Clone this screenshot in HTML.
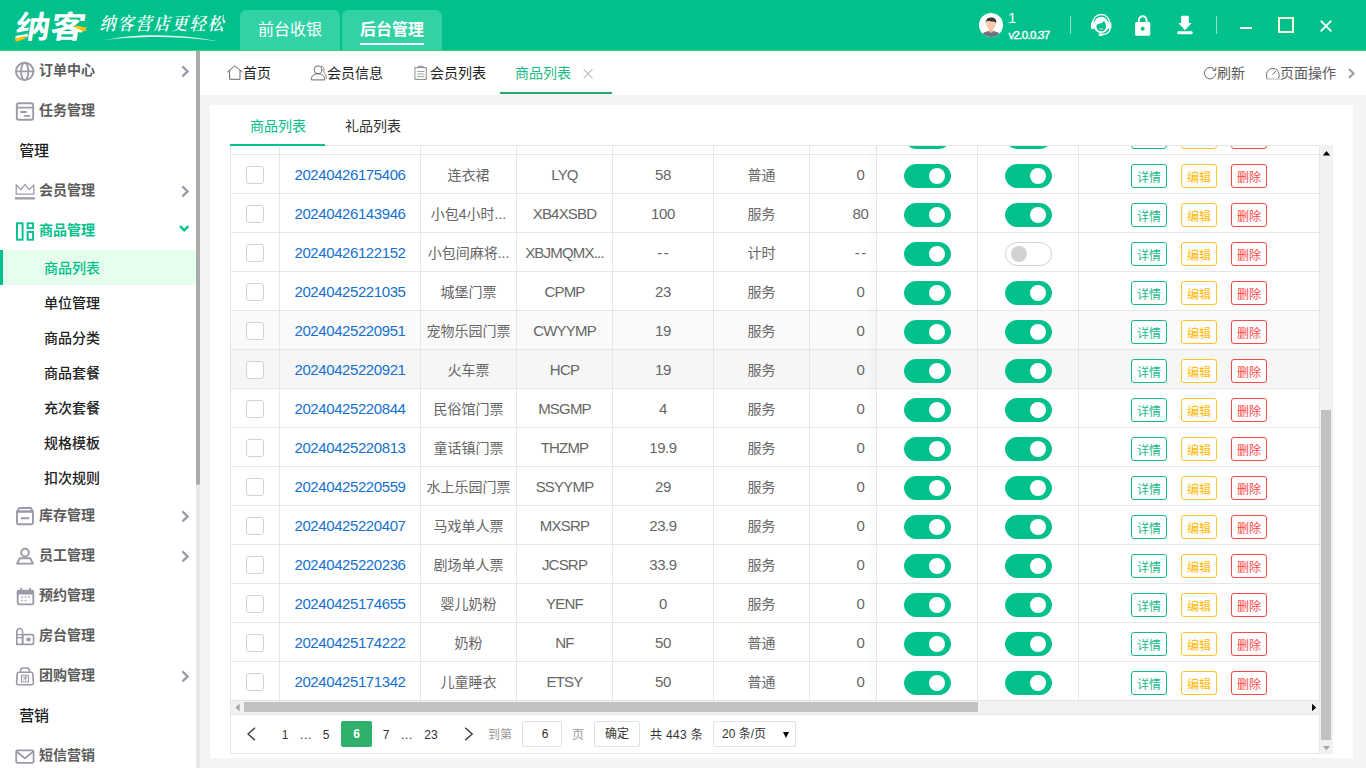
<!DOCTYPE html>
<html lang="zh-CN">
<head>
<meta charset="utf-8">
<title>纳客 - 商品列表</title>
<style>
*{box-sizing:border-box;margin:0;padding:0}
html,body{width:1366px;height:768px;overflow:hidden}
body{position:relative;background:#f4f4f4;font-family:"Liberation Sans","Noto Sans CJK SC",sans-serif;font-size:14px;color:#333;line-height:1}
.a{position:absolute}
svg{position:absolute;overflow:visible}
i{font-style:normal}
/* header */
#hd{left:0;top:0;width:1366px;height:50px;background:#00c08b}
#hdl{left:0;top:50px;width:1366px;height:1px;background:#3fd272}
#logo{left:12px;top:6px;font-size:31px;line-height:44px;font-weight:700;color:#fff;letter-spacing:0;transform:skewX(-9deg) scaleX(1.13);transform-origin:0 100%;white-space:nowrap}
#slogan{left:101px;top:11px;font-family:"Liberation Serif","Noto Serif CJK SC",serif;font-size:16px;line-height:26px;color:#fff;letter-spacing:2px;font-weight:600;white-space:nowrap;transform:skewX(-14deg) scaleY(1.12);transform-origin:0 50%}
.ht{top:10px;width:100px;height:40px;background:#33d1a6;border-radius:6px 6px 0 0;color:#fff;font-size:16px;line-height:40px;text-align:center}
.ht b{font-weight:700}
#hul{left:360px;top:43px;width:64px;height:2px;background:#fff}
.vd{top:16px;width:1px;height:18px;background:rgba(255,255,255,.55)}
#un{left:1008px;top:8.500px;font-size:15px;line-height:18px;color:#fff}
#ver{left:1008.500px;top:27.600px;font-size:11.500px;line-height:14px;color:#fff;font-weight:400;-webkit-text-stroke:.35px #fff;letter-spacing:-.7px;white-space:nowrap}
/* sidebar */
#sb{left:0;top:51px;width:196px;height:717px;background:#fff}
#sbt{left:196px;top:51px;width:4px;height:717px;background:#e8e8e8}
#sbh{left:196px;top:51px;width:4px;height:434px;background:#ababab;border-radius:0 0 2px 2px}
.mi{left:39px;font-size:14px;line-height:20px;font-weight:700;color:#5c5c5c;white-space:nowrap}
.mi.on{color:#00c08b}
.sec{left:19.300px;margin-top:.7px;font-size:15px;line-height:20px;font-weight:500;color:#1a1a1a;letter-spacing:-.3px}
.smi{left:44px;font-size:14px;line-height:20px;font-weight:500;color:#222;white-space:nowrap}
.smi.on{color:#00c08b}
#act{left:0;top:250px;width:196px;height:35px;background:#e6feec;border-left:3px solid #00c08b}
/* tab bar */
#tbar{left:200px;top:51px;width:1166px;height:44px;background:#fff}
.tt{top:63.400px;font-size:14px;line-height:20px;color:#222;white-space:nowrap}
.tt.on{color:#1bbc86;top:63px}
.tt.g{color:#5a5a5a}
#tul{left:500px;top:92px;width:112px;height:2px;background:#22ac68}
/* panel */
#pn{left:210px;top:105px;width:1143px;height:653px;background:#fff}
.it{top:116px;font-size:14px;line-height:20px;color:#333;white-space:nowrap}
.it.on{color:#00c08b}
#itl{left:230px;top:145px;width:1103px;height:1px;background:#e6e6e6}
#iul{left:230px;top:144px;width:95px;height:2px;background:#00c08b}
#box{left:230px;top:145px;width:1103px;height:609px;border:1px solid #e6e6e6;border-right:0}
#tb{left:231px;top:146px;width:1088px;height:555px;overflow:hidden;color:#666}
.tr{position:absolute;left:0;width:1088px;height:39px}
.td{position:absolute;top:0;height:39px;border-right:1px solid #e6e6e6;border-bottom:1px solid #e6e6e6;text-align:center;line-height:40px;font-size:14px;white-space:nowrap;background:#fff;z-index:1}
.c1,.c4,.c6{font-size:15px;letter-spacing:-.41px;line-height:39.500px}
.c3{font-size:15px;letter-spacing:-.8px;line-height:39.500px}
.hv1 .td{background:#fafafa}
.hv2 .td{background:#f6f6f6}
.c0{left:0;width:49px}.c1{left:49px;width:141px}.c2{left:190px;width:96px}.c3{left:286px;width:96px}.c4{left:382px;width:101px}.c5{left:483px;width:96px}.c6{left:579px;width:102px}
.f1{left:646px;width:101px;z-index:3}.f2{left:747px;width:101px;z-index:3}.f3{left:848px;width:240px;border-right:0;z-index:3}
.td a{color:#1570d0}
#fxs{left:645px;top:0;width:1px;height:555px;background:#e6e6e6;box-shadow:-1px 0 8px rgba(0,0,0,.18);z-index:2}
.cb{position:absolute;left:15px;top:11px;width:18px;height:18px;border:1px solid #d2d2d2;border-radius:3px;background:#fff}
.sw{position:absolute;left:27px;top:9px;width:47px;height:24px;border-radius:12px;background:#00c08b;border:1px solid #00c08b}
.sw i{position:absolute;left:24px;top:3px;width:16px;height:16px;border-radius:8px;background:#fff}
.sw.off{background:#fff;border-color:#d2d2d2}
.sw.off i{left:5px;background:#d2d2d2}
.btn{position:absolute;top:9px;width:36px;height:24px;border:1px solid;border-radius:3px;font-size:12px;line-height:26px;text-align:center;background:#fff}
.btn.g{left:52px;color:#16ba8a;border-color:#16ba8a}
.btn.y{left:102px;color:#ffb800;border-color:#ffc524}
.btn.r{left:152px;color:#ff4646;border-color:#ff4646}
/* scrollbars */
#hs{left:231px;top:701px;width:1088px;height:13px;background:#f1f1f1}
#hst{left:244px;top:702px;width:734px;height:10px;background:#c1c1c1}
#hsb{left:231px;top:714px;width:1088px;height:1px;background:#e6e6e6}
#vs{left:1319px;top:145px;width:14px;height:609px;background:#f1f1f1;border-left:1px solid #e6e6e6}
#vst{left:1321px;top:410px;width:10px;height:330px;background:#c1c1c1}
/* pagination */
.pg{top:724.500px;font-size:12px;line-height:20px;color:#333;white-space:nowrap;text-align:center}
.pg.l{color:#999}
#cur{left:341px;top:721px;width:31px;height:26px;background:#2fb06c;border-radius:2px;color:#fff;font-size:12px;line-height:26px;text-align:center;font-weight:700}
.bx{top:721px;height:26px;border:1px solid #e2e2e2;border-radius:2px;background:#fff;font-size:12px;line-height:24px;color:#333;white-space:nowrap}
</style>
</head>
<body>
<!-- ============ header ============ -->
<div class="a" id="hd"></div>
<div class="a" id="hdl"></div>
<div class="a" id="logo">纳客</div>
<svg style="left:0;top:0;z-index:5" width="100" height="50" viewBox="0 0 100 50">
<path d="M15 37.400 C18.500 38.200 22 37 25.600 35.800 L25.200 38.400 C21.500 39.600 18.800 41.600 15.600 41.200 Z" fill="#ffc107"/>
<path d="M73.500 26.200 C78 24.800 81.500 28 86.300 26.800 L85.800 30.800 C81 32 78.500 28 73.500 26.200 Z" fill="#ffc107"/>
</svg>
<div class="a" id="slogan">纳客营店更轻松</div>
<svg style="left:0;top:0" width="240" height="50" viewBox="0 0 240 50">
<path d="M103 40.300 C135 33.200 180 33.400 219 41.400 C180 35.600 135 36 103 40.300 Z" fill="#fff" opacity=".95"/>
</svg>
<div class="a ht" style="left:240px">前台收银</div>
<div class="a ht" style="left:342px"><b>后台管理</b></div>
<div class="a" id="hul"></div>

<!-- avatar -->
<svg style="left:979px;top:13px" width="24" height="24" viewBox="0 0 24 24">
<defs><clipPath id="avc"><circle cx="12" cy="12" r="12"/></clipPath></defs>
<circle cx="12" cy="12" r="12" fill="#fff"/>
<g clip-path="url(#avc)">
<path d="M2.5 25 C2.5 19.5 6.5 18 12 18 C17.5 18 21.5 19.5 21.5 25 Z" fill="#6f7380"/>
<path d="M10 15.5 h4 v3.2 c-1.2 1.2 -2.8 1.2 -4 0 Z" fill="#f2b99a"/>
<ellipse cx="12" cy="11.3" rx="4.6" ry="5.3" fill="#f7c9aa"/>
<path d="M6.9 10.8 C6.2 6.2 9 4.2 12.4 4.4 C16 4.3 18 6.6 17.1 10.8 C16.6 8.9 15.6 8.3 13.8 8.4 C11.6 8.6 9.2 8.2 8.2 7.8 C7.4 8.5 7.1 9.6 6.9 10.8 Z" fill="#3a3636"/>
</g>
</svg>
<div class="a" id="un">1</div>
<div class="a" id="ver">v2.0.0.37</div>
<div class="a vd" style="left:1070px"></div>
<!-- headset -->
<svg style="left:1090px;top:13px" width="23" height="24" viewBox="0 0 23 24">
<path d="M2.600 11 C2.600 5.200 6.400 1.500 11.200 1.500 C16 1.500 19.800 5.200 19.800 11" fill="none" stroke="#fff" stroke-width="1.300"/>
<path d="M11.200 3.800 C15.600 3.800 18.600 7.600 18.600 12 C18.600 16.800 15.400 20 11.200 20 C7 20 3.800 16.800 3.800 12 C3.800 7.600 6.800 3.800 11.200 3.800 Z M6.400 13.400 C6.400 16.200 8.400 18.200 11.200 18.200 C14 18.200 16 16.200 16 13.400 C16 12 15.700 11 15.300 10.200 C14.700 9.600 14.300 8.800 14.100 7.800 C13.100 9.600 10.800 10.800 8.400 11 C7.200 11.100 6.400 11.800 6.400 13.400 Z" fill="#fff" fill-rule="evenodd"/>
<rect x="1" y="8.600" width="3.600" height="7.600" rx="1.800" fill="#fff"/>
<rect x="17.800" y="8.600" width="3.600" height="7.600" rx="1.800" fill="#fff"/>
<path d="M19.900 15.400 C19.900 19 16.800 21.200 12.200 21.500" fill="none" stroke="#fff" stroke-width="1.300"/>
<rect x="8.600" y="20.300" width="4.200" height="2.800" rx="1.400" fill="#fff"/>
<path d="M9.600 15.600 C10.600 16.500 12 16.500 13 15.600" fill="none" stroke="#fff" stroke-width="1"/>
</svg>
<!-- lock -->
<svg style="left:1135px;top:15px" width="16" height="21" viewBox="0 0 16 21">
<path d="M3.8 8 V5.4 C3.8 2.9 5.6 1.3 7.7 1.3 C9.8 1.3 11.6 2.9 11.6 5.4 V8" fill="none" stroke="#fff" stroke-width="1.9"/>
<path d="M1.6 7 H13.8 A1.5 1.5 0 0 1 15.3 8.5 V19.2 A1.5 1.5 0 0 1 13.8 20.7 H1.6 A1.5 1.5 0 0 1 .1 19.2 V8.500 A1.5 1.5 0 0 1 1.6 7 Z M7.700 11.800 A2 2 0 1 0 7.710 11.800 Z" fill="#fff" fill-rule="evenodd"/>
</svg>
<!-- download -->
<svg style="left:1177px;top:15px" width="16" height="20" viewBox="0 0 16 20">
<path d="M5 .7 H11 A.8 .8 0 0 1 11.800 1.500 V8 H14.700 L8 15.300 L1.300 8 H4.200 V1.500 A.8 .8 0 0 1 5 .7 Z" fill="#fff"/>
<rect x=".3" y="16.2" width="15.4" height="3.1" rx="1.2" fill="#fff"/>
</svg>
<div class="a vd" style="left:1216px"></div>
<!-- window controls -->
<div class="a" style="left:1240px;top:27px;width:12px;height:2px;background:#fff"></div>
<div class="a" style="left:1278px;top:17px;width:16px;height:16px;border:2px solid #fafadc"></div>
<svg style="left:1320px;top:20px" width="12" height="12" viewBox="0 0 12 12"><path d="M.7 .7 L11.3 11.3 M11.3 .7 L.7 11.3" stroke="#fff" stroke-width="1.9" fill="none"/></svg>

<!-- ============ sidebar ============ -->
<div class="a" id="sb"></div>
<div class="a" id="sbt"></div>
<div class="a" id="sbh"></div>
<div class="a" id="act"></div>

<!-- icons -->
<svg style="left:0;top:0" width="200" height="768" viewBox="0 0 200 768" fill="none" stroke="#9a9aa8" stroke-width="1.9" stroke-linecap="round" stroke-linejoin="round">
<!-- globe -->
<circle cx="24.7" cy="71.4" r="8.7"/>
<ellipse cx="24.7" cy="71.4" rx="3.6" ry="8.7"/>
<path d="M16 71.400 H33.400"/>
<!-- task -->
<rect x="16.800" y="103.200" width="16.400" height="16.600" rx="2"/>
<path d="M16.800 107.600 H33.200"/>
<path d="M21 112 H26 M24.500 115.800 H29.500" stroke-width="1.8"/>
<!-- crown -->
<path d="M16.200 194.200 V185 L20.800 189.600 L25 184.400 L29.200 189.600 L33.800 185 V194.200 Z" stroke-width="1.3"/>
<path d="M15.800 198.400 H34.200" stroke-width="2.2"/>
<!-- goods (green) -->
<g stroke="#00c08b" stroke-width="1.9" stroke-linejoin="miter" stroke-linecap="butt">
<rect x="17" y="223.300" width="5.600" height="16.400"/>
<rect x="27.600" y="223.300" width="5.500" height="4.800"/>
<rect x="27.600" y="232" width="5.500" height="7.700"/>
</g>
<!-- stock box -->
<path d="M17 511.500 L19.300 508 H30.700 L33 511.500 Z"/>
<rect x="17" y="511.500" width="16" height="12.700" rx="1.800"/>
<path d="M21.600 518.200 H28.400" stroke-width="2"/>
<!-- staff -->
<circle cx="25" cy="552.600" r="3.900"/>
<path d="M17 563.600 L19.800 558.200 H30.200 L33 563.600 Z"/>
<!-- calendar -->
<rect x="17.700" y="590.800" width="15.600" height="13.600" rx="1.500"/>
<path d="M17.700 591 H33.300 V594 H17.700 Z" fill="#9a9aa8" stroke-width="1"/>
<path d="M21 588.600 V591 M30 588.600 V591" stroke-width="1.800"/>
<path d="M21.300 597 H22.700 M24.800 597 H26.200 M28.300 597 H29.700 M21.300 600.400 H22.700 M24.800 600.400 H26.200" stroke-width="1.500" stroke-linecap="butt"/>
<!-- room -->
<path d="M16.800 644.400 V632.200 C16.800 630 18.200 628.500 19.600 628.500 C21 628.500 22.600 630 22.600 632.200 V644.400 Z" stroke-width="1.600"/>
<path d="M17 634.600 H22.400 M17 637.600 H22.400" stroke-width="1.200" stroke-linecap="butt"/>
<rect x="22.600" y="634.600" width="11" height="9.800" rx="1.800" stroke-width="1.600"/>
<rect x="26.400" y="637.800" width="4.200" height="3.400" fill="#9a9aa8" stroke="none"/>
<!-- group buy bag -->
<path d="M20.600 672.200 V670.600 C20.600 668.800 22 668 23.200 668 H26.800 C28 668 29.400 668.800 29.400 670.600 V672.200" stroke-width="1.600"/>
<path d="M18.800 672.200 H31.200 C32.200 672.200 32.700 672.800 32.800 673.600 L33.400 683 C33.500 684 32.800 684.800 31.800 684.800 H18.200 C17.200 684.800 16.500 684 16.600 683 L17.200 673.600 C17.300 672.800 17.800 672.200 18.800 672.200 Z" stroke-width="1.600"/>
<rect x="21.500" y="675.200" width="7" height="6.800" stroke-width="1.100"/>
<path d="M23 677.400 H27 M25.600 676.400 V680.800 M23.200 680.200 L25.600 678" stroke-width=".9"/>
<!-- sms -->
<rect x="16.200" y="750.400" width="17.400" height="12.400" rx="1.500" stroke-width="1.800"/>
<path d="M16.800 751.800 L24.900 758.200 L33 751.800" stroke-width="1.800"/>
<!-- chevrons -->
<g stroke-width="2.300" stroke-linecap="butt" stroke-linejoin="miter">
<path d="M182.400 66.400 L187.600 71.400 L182.400 76.400"/>
<path d="M182.400 186.400 L187.600 191.400 L182.400 196.400"/>
<path d="M182.400 511.400 L187.600 516.400 L182.400 521.400"/>
<path d="M182.400 551.400 L187.600 556.400 L182.400 561.400"/>
<path d="M182.400 671.400 L187.600 676.400 L182.400 681.400"/>
<path d="M180 226.200 L184.200 230.400 L188.400 226.200" stroke="#00c08b" stroke-width="2.400"/>
</g>
</svg>

<div class="a mi" style="top:60px">订单中心</div>
<div class="a mi" style="top:100px">任务管理</div>
<div class="a sec" style="top:140px">管理</div>
<div class="a mi" style="top:180px">会员管理</div>
<div class="a mi on" style="top:220px">商品管理</div>
<div class="a smi on" style="top:258px">商品列表</div>
<div class="a smi" style="top:293px">单位管理</div>
<div class="a smi" style="top:328px">商品分类</div>
<div class="a smi" style="top:363px">商品套餐</div>
<div class="a smi" style="top:398px">充次套餐</div>
<div class="a smi" style="top:433px">规格模板</div>
<div class="a smi" style="top:468px">扣次规则</div>
<div class="a mi" style="top:505px">库存管理</div>
<div class="a mi" style="top:545px">员工管理</div>
<div class="a mi" style="top:585px">预约管理</div>
<div class="a mi" style="top:625px">房台管理</div>
<div class="a mi" style="top:665px">团购管理</div>
<div class="a sec" style="top:705px">营销</div>
<div class="a mi" style="top:745px">短信营销</div>

<!-- ============ tab bar ============ -->
<div class="a" id="tbar"></div>
<svg style="left:200px;top:51px" width="1166" height="44" viewBox="200 51 1166 44" fill="none" stroke="#6a6a6a" stroke-width="1" stroke-linejoin="round" stroke-linecap="round">
<!-- home -->
<path d="M227.500 72 L234.800 65.800 L242.200 72"/>
<path d="M229.600 70.600 V79.300 H240 V70.600"/>
<!-- user -->
<circle cx="318" cy="69.800" r="3.900"/>
<path d="M311.300 79.500 C311.300 75.600 314 73.800 318 73.800 C322 73.800 324.700 75.600 324.700 79.500 Z"/>
<path d="M321.200 66 C324.200 66.400 325 69.600 323.400 72.200 C325.600 73.200 326.400 75.600 326.400 78.800" stroke="#888"/>
<!-- clipboard -->
<rect x="415.300" y="67.600" width="11" height="11.800" stroke="#888"/>
<path d="M418.600 67.600 V66.300 H423 V67.600" stroke="#888"/>
<path d="M417.600 71.500 H424 M417.600 74 H424 M417.600 76.500 H424" stroke="#999" stroke-width=".9"/>
<!-- close x -->
<path d="M584 69.600 L592.200 77.800 M592.200 69.600 L584 77.800" stroke="#bbb" stroke-width="1.1"/>
<!-- refresh -->
<path d="M1214.800 69.600 A5.800 5.800 0 1 0 1216 73.600"/>
<path d="M1215.800 67.400 V70.400 H1212.800"/>
<!-- gauge -->
<path d="M1267.200 78.600 C1264.800 73.800 1268 68.400 1272.800 68.400 C1277.600 68.400 1280.800 73.800 1278.400 78.600"/>
<path d="M1266.400 79 H1279.400" stroke="#ccc" stroke-width="1.300"/>
<path d="M1272.600 74.400 L1275.600 71.400"/>
<!-- chevron -->
<path d="M1349 69 L1353.600 73.400 L1349 77.800" stroke="#9a9aa8" stroke-width="2" stroke-linecap="butt" stroke-linejoin="miter"/>
</svg>
<div class="a tt" style="left:243px">首页</div>
<div class="a tt" style="left:327px">会员信息</div>
<div class="a tt" style="left:430px">会员列表</div>
<div class="a tt on" style="left:515px">商品列表</div>
<div class="a" id="tul"></div>
<div class="a tt g" style="left:1217px">刷新</div>
<div class="a tt g" style="left:1280px">页面操作</div>

<!-- ============ panel ============ -->
<div class="a" id="pn"></div>
<div class="a it on" style="left:250px">商品列表</div>
<div class="a it" style="left:345px">礼品列表</div>
<div class="a" id="box"></div>
<div class="a" id="iul"></div>

<div class="a" id="tb">
<div class="tr" style="top:-30px"><div class="td c0"></div><div class="td c1"></div><div class="td c2"></div><div class="td c3"></div><div class="td c4"></div><div class="td c5"></div><div class="td c6"></div><div class="td f1"><span class="sw"><i></i></span></div><div class="td f2"><span class="sw"><i></i></span></div><div class="td f3"><span class="btn g">详情</span><span class="btn y">编辑</span><span class="btn r">删除</span></div></div>
<div class="tr" style="top:9px"><div class="td c0"><span class="cb"></span></div><div class="td c1"><a>20240426175406</a></div><div class="td c2">连衣裙</div><div class="td c3">LYQ</div><div class="td c4">58</div><div class="td c5">普通</div><div class="td c6">0</div><div class="td f1"><span class="sw"><i></i></span></div><div class="td f2"><span class="sw"><i></i></span></div><div class="td f3"><span class="btn g">详情</span><span class="btn y">编辑</span><span class="btn r">删除</span></div></div>
<div class="tr" style="top:48px"><div class="td c0"><span class="cb"></span></div><div class="td c1"><a>20240426143946</a></div><div class="td c2">小包4小时...</div><div class="td c3">XB4XSBD</div><div class="td c4">100</div><div class="td c5">服务</div><div class="td c6">80</div><div class="td f1"><span class="sw"><i></i></span></div><div class="td f2"><span class="sw"><i></i></span></div><div class="td f3"><span class="btn g">详情</span><span class="btn y">编辑</span><span class="btn r">删除</span></div></div>
<div class="tr" style="top:87px"><div class="td c0"><span class="cb"></span></div><div class="td c1"><a>20240426122152</a></div><div class="td c2">小包间麻将...</div><div class="td c3">XBJMQMX...</div><div class="td c4"><span style="letter-spacing:1.6px;margin-left:1.6px">--</span></div><div class="td c5">计时</div><div class="td c6"><span style="letter-spacing:1.6px;margin-left:1.6px">--</span></div><div class="td f1"><span class="sw"><i></i></span></div><div class="td f2"><span class="sw off"><i></i></span></div><div class="td f3"><span class="btn g">详情</span><span class="btn y">编辑</span><span class="btn r">删除</span></div></div>
<div class="tr" style="top:126px"><div class="td c0"><span class="cb"></span></div><div class="td c1"><a>20240425221035</a></div><div class="td c2">城堡门票</div><div class="td c3">CPMP</div><div class="td c4">23</div><div class="td c5">服务</div><div class="td c6">0</div><div class="td f1"><span class="sw"><i></i></span></div><div class="td f2"><span class="sw"><i></i></span></div><div class="td f3"><span class="btn g">详情</span><span class="btn y">编辑</span><span class="btn r">删除</span></div></div>
<div class="tr hv1" style="top:165px"><div class="td c0"><span class="cb"></span></div><div class="td c1"><a>20240425220951</a></div><div class="td c2">宠物乐园门票</div><div class="td c3">CWYYMP</div><div class="td c4">19</div><div class="td c5">服务</div><div class="td c6">0</div><div class="td f1"><span class="sw"><i></i></span></div><div class="td f2"><span class="sw"><i></i></span></div><div class="td f3"><span class="btn g">详情</span><span class="btn y">编辑</span><span class="btn r">删除</span></div></div>
<div class="tr hv2" style="top:204px"><div class="td c0"><span class="cb"></span></div><div class="td c1"><a>20240425220921</a></div><div class="td c2">火车票</div><div class="td c3">HCP</div><div class="td c4">19</div><div class="td c5">服务</div><div class="td c6">0</div><div class="td f1"><span class="sw"><i></i></span></div><div class="td f2"><span class="sw"><i></i></span></div><div class="td f3"><span class="btn g">详情</span><span class="btn y">编辑</span><span class="btn r">删除</span></div></div>
<div class="tr" style="top:243px"><div class="td c0"><span class="cb"></span></div><div class="td c1"><a>20240425220844</a></div><div class="td c2">民俗馆门票</div><div class="td c3">MSGMP</div><div class="td c4">4</div><div class="td c5">服务</div><div class="td c6">0</div><div class="td f1"><span class="sw"><i></i></span></div><div class="td f2"><span class="sw"><i></i></span></div><div class="td f3"><span class="btn g">详情</span><span class="btn y">编辑</span><span class="btn r">删除</span></div></div>
<div class="tr" style="top:282px"><div class="td c0"><span class="cb"></span></div><div class="td c1"><a>20240425220813</a></div><div class="td c2">童话镇门票</div><div class="td c3">THZMP</div><div class="td c4">19.9</div><div class="td c5">服务</div><div class="td c6">0</div><div class="td f1"><span class="sw"><i></i></span></div><div class="td f2"><span class="sw"><i></i></span></div><div class="td f3"><span class="btn g">详情</span><span class="btn y">编辑</span><span class="btn r">删除</span></div></div>
<div class="tr" style="top:321px"><div class="td c0"><span class="cb"></span></div><div class="td c1"><a>20240425220559</a></div><div class="td c2">水上乐园门票</div><div class="td c3">SSYYMP</div><div class="td c4">29</div><div class="td c5">服务</div><div class="td c6">0</div><div class="td f1"><span class="sw"><i></i></span></div><div class="td f2"><span class="sw"><i></i></span></div><div class="td f3"><span class="btn g">详情</span><span class="btn y">编辑</span><span class="btn r">删除</span></div></div>
<div class="tr" style="top:360px"><div class="td c0"><span class="cb"></span></div><div class="td c1"><a>20240425220407</a></div><div class="td c2">马戏单人票</div><div class="td c3">MXSRP</div><div class="td c4">23.9</div><div class="td c5">服务</div><div class="td c6">0</div><div class="td f1"><span class="sw"><i></i></span></div><div class="td f2"><span class="sw"><i></i></span></div><div class="td f3"><span class="btn g">详情</span><span class="btn y">编辑</span><span class="btn r">删除</span></div></div>
<div class="tr" style="top:399px"><div class="td c0"><span class="cb"></span></div><div class="td c1"><a>20240425220236</a></div><div class="td c2">剧场单人票</div><div class="td c3">JCSRP</div><div class="td c4">33.9</div><div class="td c5">服务</div><div class="td c6">0</div><div class="td f1"><span class="sw"><i></i></span></div><div class="td f2"><span class="sw"><i></i></span></div><div class="td f3"><span class="btn g">详情</span><span class="btn y">编辑</span><span class="btn r">删除</span></div></div>
<div class="tr" style="top:438px"><div class="td c0"><span class="cb"></span></div><div class="td c1"><a>20240425174655</a></div><div class="td c2">婴儿奶粉</div><div class="td c3">YENF</div><div class="td c4">0</div><div class="td c5">服务</div><div class="td c6">0</div><div class="td f1"><span class="sw"><i></i></span></div><div class="td f2"><span class="sw"><i></i></span></div><div class="td f3"><span class="btn g">详情</span><span class="btn y">编辑</span><span class="btn r">删除</span></div></div>
<div class="tr" style="top:477px"><div class="td c0"><span class="cb"></span></div><div class="td c1"><a>20240425174222</a></div><div class="td c2">奶粉</div><div class="td c3">NF</div><div class="td c4">50</div><div class="td c5">普通</div><div class="td c6">0</div><div class="td f1"><span class="sw"><i></i></span></div><div class="td f2"><span class="sw"><i></i></span></div><div class="td f3"><span class="btn g">详情</span><span class="btn y">编辑</span><span class="btn r">删除</span></div></div>
<div class="tr" style="top:516px"><div class="td c0"><span class="cb"></span></div><div class="td c1"><a>20240425171342</a></div><div class="td c2">儿童睡衣</div><div class="td c3">ETSY</div><div class="td c4">50</div><div class="td c5">普通</div><div class="td c6">0</div><div class="td f1"><span class="sw"><i></i></span></div><div class="td f2"><span class="sw"><i></i></span></div><div class="td f3"><span class="btn g">详情</span><span class="btn y">编辑</span><span class="btn r">删除</span></div></div>
<div class="a" id="fxs"></div>
</div>

<!-- scrollbars -->
<div class="a" id="hs"></div>
<div class="a" id="hst"></div>
<div class="a" id="hsb"></div>
<svg style="left:231px;top:701px" width="1088" height="13" viewBox="0 0 1088 13">
<path d="M8.600 2.800 L4.400 6.500 L8.600 10.200 Z" fill="#a3a3a3"/>
<path d="M1081 2.700 L1085.200 6.500 L1081 10.300 Z" fill="#000"/>
</svg>
<div class="a" id="vs"></div>
<div class="a" id="vst"></div>
<svg style="left:1320px;top:145px" width="13" height="609" viewBox="0 0 13 609">
<path d="M2.800 10.400 L6.500 6 L10.200 10.400 Z" fill="#000"/>
<path d="M3 601 L6.500 605.200 L10 601 Z" fill="#a3a3a3"/>
</svg>

<!-- pagination -->
<svg style="left:246px;top:726px" width="230" height="16" viewBox="0 0 230 16" fill="none" stroke="#333" stroke-width="1.300">
<path d="M9 1.700 L2 8 L9 14.300"/>
<path d="M219.200 1.700 L226.200 8 L219.200 14.300"/>
</svg>
<div class="a pg" style="left:275px;width:20px">1</div>
<div class="a pg" style="left:296px;width:20px;letter-spacing:.6px">...</div>
<div class="a pg" style="left:316px;width:20px">5</div>
<div class="a" id="cur">6</div>
<div class="a pg" style="left:376px;width:20px">7</div>
<div class="a pg" style="left:397px;width:20px;letter-spacing:.6px">...</div>
<div class="a pg" style="left:419px;width:24px">23</div>
<div class="a pg l" style="left:488px">到第</div>
<div class="a bx" style="left:522px;width:40px;text-align:center;padding-left:6px">6</div>
<div class="a pg l" style="left:572px">页</div>
<div class="a bx" style="left:594px;width:46px;text-align:center">确定</div>
<div class="a pg" style="left:650px;letter-spacing:.35px">共 443 条</div>
<div class="a bx" style="left:713px;width:83px;padding-left:8px">20 条/页<i style="position:absolute;left:69px;top:9.500px;width:0;height:0;border:3.200px solid transparent;border-top:6px solid #000;border-bottom:0"></i></div>
</body>
</html>
